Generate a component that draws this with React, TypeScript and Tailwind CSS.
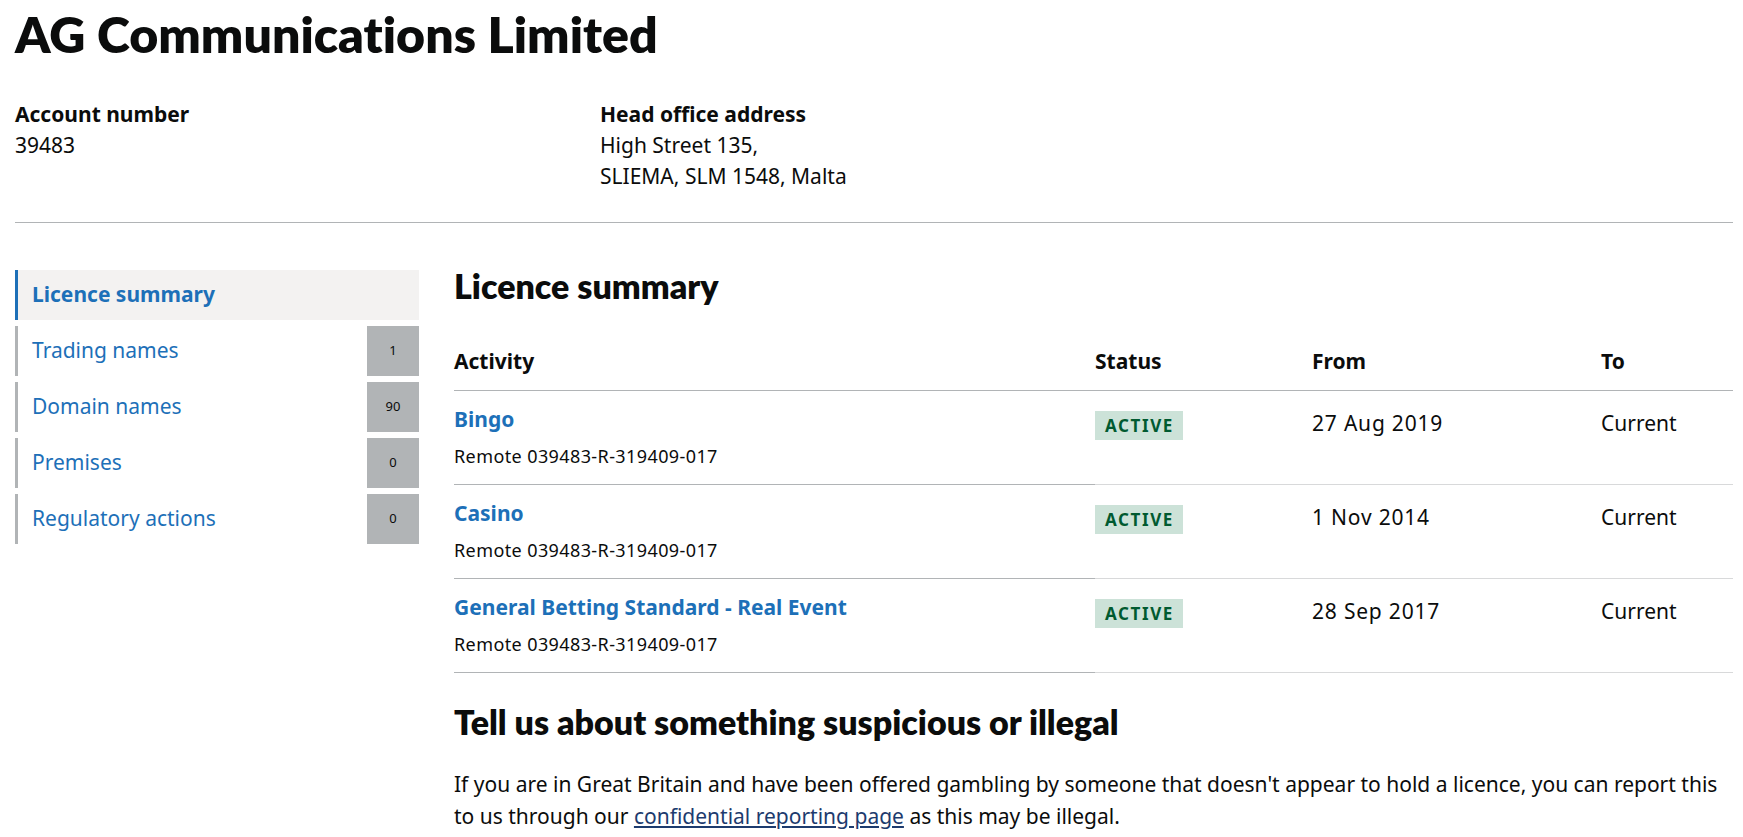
import React from "react";

const body = { fontFamily: '"Noto Sans", "Lato", sans-serif' };
const head = { fontFamily: '"Lato", "Noto Sans", sans-serif' };

const navItems = [
  { label: "Trading names", count: "1" },
  { label: "Domain names", count: "90" },
  { label: "Premises", count: "0" },
  { label: "Regulatory actions", count: "0" },
];

const rows = [
  { name: "Bingo", from: "27 Aug 2019" },
  { name: "Casino", from: "1 Nov 2014" },
  { name: "General Betting Standard - Real Event", from: "28 Sep 2017" },
];

export default function App() {
  return (
    <div className="bg-white text-[#0b0c0c] min-h-screen pl-[15px]" style={body}>
      <div className="w-[1718px]">
        <h1 className="text-[50px] font-extrabold leading-[50px] pt-[9px] mb-[40px] [font-variant-ligatures:none]" style={head}>
          AG Communications Limited
        </h1>
        <div className="flex text-[21px] leading-[31px] pb-[30px]">
          <div className="w-[585px]">
            <div className="font-bold">Account number</div>
            <div>39483</div>
          </div>
          <div>
            <div className="font-bold">Head office address</div>
            <div>High Street 135,</div>
            <div>SLIEMA, SLM 1548, Malta</div>
          </div>
        </div>
        <div className="h-px bg-[#b1b4b6]" />
        <div className="flex pt-[43px]">
          <nav className="w-[404px] shrink-0 flex flex-col gap-[6px] mt-[4px]">
            <div className="h-[50px] bg-[#f3f2f1] border-l-[3px] border-[#1d70b8] flex items-center pl-[14px] text-[21px] font-bold text-[#1d70b8]">
              Licence summary
            </div>
            {navItems.map((n) => (
              <div key={n.label} className="h-[50px] border-l-[3px] border-[#b1b4b6] flex items-center justify-between pl-[14px]">
                <span className="text-[21px] text-[#1d70b8]">{n.label}</span>
                <span className="w-[52px] h-full bg-[#b1b4b6] flex items-center justify-center text-[13px] text-[#0b0c0c]">
                  {n.count}
                </span>
              </div>
            ))}
          </nav>
          <main className="ml-[35px] flex-1">
            <h2 className="text-[34px] font-extrabold leading-[40px] mb-[40px] [font-variant-ligatures:none]" style={head}>
              Licence summary
            </h2>
            <table className="w-full border-collapse text-[21px]">
              <thead>
                <tr className="text-left">
                  <th className="font-bold leading-[31px] pb-[13px] border-b border-[#b1b4b6] w-[641px]">Activity</th>
                  <th className="font-bold leading-[31px] pb-[13px] border-b border-[#b1b4b6] w-[217px]">Status</th>
                  <th className="font-bold leading-[31px] pb-[13px] border-b border-[#b1b4b6] w-[289px]">From</th>
                  <th className="font-bold leading-[31px] pb-[13px] border-b border-[#b1b4b6]">To</th>
                </tr>
              </thead>
              <tbody>
                {rows.map((r) => (
                  <tr key={r.name} className="align-top">
                    <td className="border-b border-[#b1b4b6] pt-[14px] pb-[17px]">
                      <div className="font-bold text-[#1d70b8] leading-[29px]">{r.name}</div>
                      <div className="text-[18px] tracking-[0.4px] leading-[22px] mt-[11px]">Remote 039483-R-319409-017</div>
                    </td>
                    <td className="border-b border-[#d8d9da] pt-[18px]">
                      <span className="inline-flex items-center h-[29px] bg-[#cce2d8] text-[#005a30] font-bold text-[17px] tracking-[1.6px] pl-[10px] pr-[9px]">
                        ACTIVE
                      </span>
                    </td>
                    <td className="border-b border-[#d8d9da] pt-[17px] leading-[31px] tracking-[0.8px]">{r.from}</td>
                    <td className="border-b border-[#d8d9da] pt-[17px] leading-[31px]">Current</td>
                  </tr>
                ))}
              </tbody>
            </table>
            <h2 className="text-[34px] font-extrabold leading-[40px] mt-[29px] mb-[26px]" style={head}>
              Tell us about something suspicious or illegal
            </h2>
            <p className="text-[21px] leading-[32px] pr-[10px]">
              If you are in Great Britain and have been offered gambling by someone that doesn't appear to hold a licence, you can report this to us through our{" "}
              <a href="#" className="underline text-[#1d3b6e]">confidential reporting page</a> as this may be illegal.
            </p>
          </main>
        </div>
      </div>
    </div>
  );
}
